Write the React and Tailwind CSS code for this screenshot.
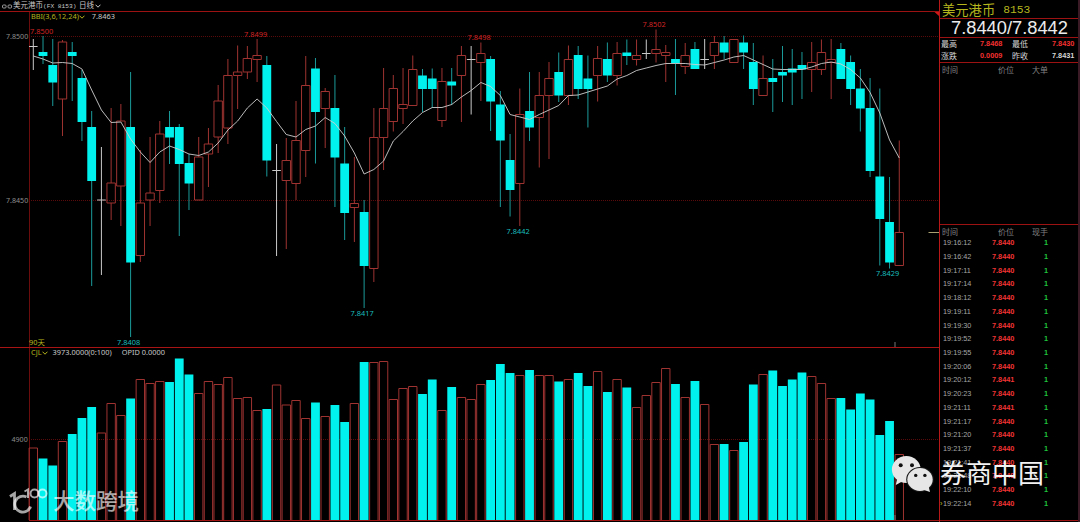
const UP = '#9e3331'
const DOWN = '#00f2ee'
const STEP = 9.73

// kind (u: up, d: down, f: flat), high, body top, body bottom, low, average, volume top
const DAYS = [
  ['f', 39, 46.5, 46.5, 70, 56, 448], ['d', 36, 52, 56, 64, 59, 458.5], ['d', 39, 65, 82.5, 106, 63, 465.5],
  ['u', 40, 42, 99, 136, 62.5, 441.5], ['d', 42, 52, 56, 101, 63.5, 434], ['d', 70, 78, 122, 141, 69, 418],
  ['d', 111, 127, 181, 286, 90, 407], ['f', 147, 200, 200, 275, 110, 433], ['u', 108, 183, 203, 220, 122.5, 403.5],
  ['u', 104, 121, 186, 226, 122, 415.5], ['d', 72, 127, 262.5, 337, 139, 398.5], ['u', 150, 203, 255.5, 262, 152, 379.5],
  ['u', 137, 193, 200, 226, 162.5, 383.5], ['u', 121, 134, 190.5, 203, 152, 381.5], ['d', 111, 127, 137.5, 164, 146, 382],
  ['d', 124, 127, 164, 236, 149.5, 358.5], ['d', 154, 163, 183.5, 210, 154, 374.5], ['u', 137, 157, 200, 200, 155.5, 393.5],
  ['u', 128, 144, 154, 187, 152, 381.5], ['u', 85, 101, 137, 153, 143, 384.5], ['u', 59, 75.5, 128, 144, 130, 377.5],
  ['u', 45.5, 72, 75.5, 109, 121, 398.5], ['u', 46, 58.5, 72, 79, 108, 397.5], ['u', 39, 55.5, 59.5, 82, 99, 410.5],
  ['d', 56, 65, 160.5, 176.5, 108, 409], ['f', 144, 170.5, 170.5, 256, 121.5, 385], ['u', 138, 160.5, 180.5, 249, 134.5, 405],
  ['u', 101, 140.5, 183.5, 200, 137, 400.5], ['u', 56, 85.5, 150.5, 177, 129.5, 418.5], ['d', 58, 68.5, 112, 163.5, 126, 402.5],
  ['u', 88, 91.5, 108.5, 148, 117.5, 416.5], ['d', 75, 108, 157.5, 207, 123.5, 405], ['d', 127, 163.5, 213, 240, 136, 422],
  ['u', 157, 203.5, 207.5, 242, 153, 403.5], ['d', 200, 212, 266, 308, 174, 362], ['u', 108, 137.5, 268.5, 282, 169.5, 362.5],
  ['u', 68, 108.5, 137.5, 170, 161, 361.5], ['u', 75, 88.5, 121.5, 131.5, 141, 399.5], ['u', 68, 104.5, 108.5, 124, 131.5, 388.5],
  ['u', 55.5, 69.5, 105.5, 105.5, 121, 386.5], ['d', 69, 75.5, 89, 112, 112.5, 394], ['d', 68.5, 78.5, 89, 108, 107.5, 379.5],
  ['u', 68, 81.5, 120.5, 127, 107.5, 410.5], ['d', 68, 81.5, 85.5, 105, 104.5, 387], ['u', 46, 55.5, 75.5, 122, 97, 397.5],
  ['f', 46, 59.5, 59.5, 114.5, 90.5, 399.5], ['u', 42.5, 53.5, 62.5, 101, 82.5, 384.5], ['d', 56, 59, 101.5, 131, 86.5, 380],
  ['d', 91, 104.5, 140.5, 207, 95.5, 364], ['d', 134, 160, 190, 216.5, 114.5, 373], ['u', 88.5, 114.5, 183.5, 226, 117, 375.5],
  ['d', 72, 111, 127.5, 141, 119.5, 370], ['u', 72, 95.5, 117.5, 167.5, 114.5, 375.5], ['u', 62, 78.5, 95.5, 159, 110, 375.5],
  ['d', 52.5, 72, 95.5, 102, 105.5, 381.5], ['u', 45.5, 59.5, 95.5, 105, 95.5, 379.5], ['d', 46, 55, 89, 99, 95, 373],
  ['d', 55.5, 78.5, 89, 127.5, 92, 386], ['u', 46, 58.5, 75.5, 101.5, 89, 371.5], ['d', 42.5, 59, 75.5, 82, 86, 392],
  ['u', 42, 53.5, 75.5, 85.5, 79, 379.5], ['d', 39.5, 52.5, 56, 65, 75.5, 387.5], ['u', 39.5, 55.5, 59.5, 65.5, 70.5, 407.5],
  ['f', 39.5, 53.5, 53.5, 59, 68, 395.5], ['u', 29.5, 49.5, 53.5, 62.5, 65.5, 382.5], ['u', 45, 52.5, 55.5, 82, 63.5, 368.5],
  ['d', 39, 59, 63, 95, 63.5, 384], ['u', 43, 55.5, 66.5, 74, 63.5, 397.5], ['d', 42, 49, 69, 69, 64.5, 381],
  ['f', 39, 59.5, 59.5, 69, 65, 404.5], ['u', 36, 42.5, 55.5, 69, 62.5, 444.5], ['d', 36, 42.5, 52.5, 59, 60, 444],
  ['u', 39.5, 39.5, 62.5, 62.5, 57, 450.5], ['d', 35.5, 42.5, 52.5, 69, 55.5, 442], ['d', 43, 62, 89, 105, 60, 384.5],
  ['u', 55.5, 78.5, 95.5, 95.5, 64.5, 374.5], ['d', 59, 78, 82, 112, 69, 370.5], ['d', 46, 72, 75.5, 102, 69.5, 386],
  ['d', 49, 68.5, 72.5, 105, 69.5, 379.5], ['d', 52, 65, 69.5, 99, 69.5, 372.5], ['u', 42, 62.5, 69.5, 92, 67, 376.5],
  ['u', 39.5, 52.5, 69.5, 75, 63.5, 383.5], ['u', 39, 59.5, 62.5, 99, 62, 398.5], ['d', 43, 49, 79, 79, 64, 398],
  ['d', 55.5, 62, 89, 105, 69.5, 409.5], ['d', 69, 88.5, 108.5, 131.5, 78, 393.5], ['d', 78, 108, 171, 177, 92.5, 399.5],
  ['d', 88.5, 176.5, 219, 265.5, 113, 435], ['d', 177, 222, 262.5, 268.5, 140, 421], ['u', 140.5, 232.5, 265.5, 265.5, 158, 454.5],
]

const PRICE_TAGS = [
  [30, 33.7, '7.8500', '#d02424'], [244, 37.2, '7.8499', '#d02424'], [467.5, 39.7, '7.8498', '#d02424'],
  [642.5, 27.2, '7.8502', '#d02424'], [117, 344.7, '7.8408', '#19bdbd'], [350.5, 315.7, '7.8417', '#19bdbd'],
  [506.5, 233.7, '7.8442', '#19bdbd'], [876, 276.2, '7.8429', '#19bdbd'],
]

const TICKS = [
  ['19:16:12', '7.8440'], ['19:16:42', '7.8440'], ['19:17:11', '7.8440'], ['19:17:14', '7.8440'],
  ['19:18:12', '7.8440'], ['19:19:11', '7.8440'], ['19:19:30', '7.8440'], ['19:19:52', '7.8440'],
  ['19:19:55', '7.8440'], ['19:20:06', '7.8440'], ['19:20:12', '7.8441'], ['19:20:23', '7.8440'],
  ['19:21:11', '7.8441'], ['19:21:17', '7.8440'], ['19:21:20', '7.8440'], ['19:21:37', '7.8440'],
  ['19:21:41', '7.8440'], ['19:21:48', '7.8440'], ['19:22:10', '7.8440'], ['19:22:14', '7.8440'],
]

const dayX = (i) => 33.3 + i * STEP

function Chevron() {
  return (
    <svg width="6" height="4" viewBox="0 0 6 4" fill="none" stroke="currentColor" aria-hidden="true">
      <path d="M0.5 0.7L3 3.2L5.5 0.7" />
    </svg>
  )
}

function Candle({ day, x }) {
  const [kind, high, top, bottom, low] = day
  if (kind === 'f') {
    return <path d={`M${x} ${high}V${low}M${x - 4.3} ${top}H${x + 4.3}`} stroke="#c9c9c9" />
  }
  if (kind === 'd') {
    return (
      <g>
        <path d={`M${x} ${high}V${low}`} stroke="#1b9a9a" />
        <rect x={x - 4.4} y={top} width="8.8" height={bottom - top} fill={DOWN} />
      </g>
    )
  }
  return (
    <path
      d={`M${x} ${high}V${top}M${x} ${bottom}V${low}M${x - 4.2} ${top}h8.4V${bottom}h-8.4z`}
      fill="none"
      stroke={UP}
    />
  )
}

function PriceChart() {
  return (
    <svg className="block h-[335px] w-full" viewBox="0 12 939 335" fontFamily='"Noto Sans", sans-serif' fontSize="7.1">
      <path d="M29.5 12V347" stroke="#6a0c0c" />
      <path d="M29 36.5H938M29 200.5H938" stroke="#5a0a0a" strokeDasharray="1 1" />
      <text x="6" y="39" fill="#8e8e8e">7.8500</text>
      <text x="6" y="202.8" fill="#8e8e8e">7.8450</text>
      {DAYS.map((day, i) => (
        <Candle key={i} day={day} x={dayX(i)} />
      ))}
      <polyline
        points={DAYS.map((day, i) => `${dayX(i)},${day[5]}`).join(' ')}
        fill="none"
        stroke="#cfcfcf"
        strokeWidth="0.9"
      />
      {PRICE_TAGS.map(([x, y, label, color]) => (
        <text key={label} x={x} y={y} fill={color} fontSize="7.4">{label}</text>
      ))}
      <path d="M928.5 232.5H939" stroke="#a8a070" />
      <path d="M895 342V347" stroke="#777" />
      <path d="M934 11.5H939V16z" fill="#d01818" />
    </svg>
  )
}

function VolumeChart() {
  return (
    <svg className="block h-[174px] w-full" viewBox="0 348 939 174" fontFamily='"Noto Sans", sans-serif' fontSize="7.1">
      <path d="M29.5 348V520" stroke="#6a0c0c" />
      <path d="M29 439.5H938" stroke="#5a0a0a" strokeDasharray="1 1" />
      <text x="11.5" y="441.5" fill="#8e8e8e">4900</text>
      {DAYS.map(([kind, , , , , , top], i) =>
        kind === 'd' ? (
          <rect key={i} x={dayX(i) - 4.4} y={top} width="8.8" height={520 - top} fill={DOWN} />
        ) : (
          <path key={i} d={`M${dayX(i) - 4.2} 520V${top}h8.4V520`} fill="none" stroke={UP} />
        ),
      )}
      <path d="M29 520.5H939" stroke="#a01414" />
      <path d="M895 515V520" stroke="#777" />
    </svg>
  )
}

function ColumnHeads({ labels }) {
  return (
    <div className="grid h-[13px] grid-cols-[56px_34px_1fr] items-center pl-[2px] text-[8px] leading-none text-[#828282]">
      {labels.map((label) => (
        <span key={label}>{label}</span>
      ))}
    </div>
  )
}

function QuotePanel() {
  return (
    <aside className="flex w-[141px] flex-none flex-col border-r-2 border-l border-r-[#3a1a24] border-l-[#b81818]">
      <div className="flex h-[19px] flex-none items-center gap-[8px] border-b border-b-[#9c1212] pt-[3px] pl-[2px] text-[13.3px] leading-none text-[#b5b51e]">
        <span>美元港币</span>
        <span className="font-['Liberation_Mono'] text-[11.3px]">8153</span>
      </div>
      <div className="flex h-[19px] flex-none items-center border-b border-b-[#9c1212] pt-px pl-[11px] font-['Liberation_Sans'] text-[18.3px] leading-none text-[#ececec]">
        7.8440/7.8442
      </div>
      <div className="grid h-[25px] flex-none grid-cols-[39px_32px_40px_1fr] content-center items-center gap-y-[4px] border-b border-b-[#9c1212] pl-px text-[8px] leading-[8px] text-[#d6d6d6]">
        <span>最高</span>
        <b className="font-['Liberation_Sans'] text-[7.3px] text-[#f03030]">7.8468</b>
        <span>最低</span>
        <b className="font-['Liberation_Sans'] text-[7.3px] text-[#f03030]">7.8430</b>
        <span>涨跌</span>
        <b className="font-['Liberation_Sans'] text-[7.3px] text-[#f03030]">0.0009</b>
        <span>昨收</span>
        <b className="font-['Liberation_Sans'] text-[7.3px]">7.8431</b>
      </div>
      <div className="h-[162px] flex-none border-b border-b-[#9c1212]">
        <ColumnHeads labels={['时间', '价位', '大单']} />
      </div>
      <ColumnHeads labels={['时间', '价位', '现手']} />
      <div className="-mt-[2px] flex-none">
        {TICKS.map(([time, price], i) => (
          <div
            key={time}
            className="grid h-[13.72px] grid-cols-[49px_52px_1fr] items-center pl-[3px] font-['Liberation_Sans'] text-[7.3px] leading-none"
          >
            <span className="relative text-[#a5a5a5]">
              {time}
              {i === TICKS.length - 1 && <i className="absolute -left-[3px] text-[#c4c422] not-italic">›</i>}
            </span>
            <b className="text-[#f03434]">{price}</b>
            <b className="text-[#1fc33c]">1</b>
          </div>
        ))}
      </div>
      <div className="mt-auto h-[2px] border-t border-t-[#9c1212]" />
    </aside>
  )
}

function SiteMark() {
  return (
    <div className="absolute top-[487px] left-[9px] flex items-center gap-[5px] text-white/65">
      <svg width="39" height="28" viewBox="0 0 39 28" fill="none" stroke="currentColor" strokeWidth="2.8" aria-hidden="true">
        <path d="M1 9.5L5.5 6.5V23" />
        <path d="M17.5 10A8 8 0 1 0 21.5 19.5" />
        <path d="M15.5 4.5L19 2.5V11" strokeWidth="2" />
        <circle cx="25.5" cy="6.5" r="4" strokeWidth="2" />
        <circle cx="33.5" cy="6.5" r="4" strokeWidth="2" />
      </svg>
      <span className="text-[21.5px] leading-[28px] font-medium">大数跨境</span>
    </div>
  )
}

function PublisherMark() {
  return (
    <div className="absolute top-[453px] left-[891px] flex items-center gap-[6px] text-[#f2f2f2]">
      <svg width="43" height="37" viewBox="0 0 43 37" aria-hidden="true">
        <g fill="#e6e6e6">
          <ellipse cx="15.3" cy="14.5" rx="14.4" ry="13.4" />
          <path d="M6 24L4.8 30L12 26z" />
        </g>
        <ellipse cx="29" cy="24.4" rx="13.8" ry="12.4" fill="#181818" />
        <g fill="#e6e6e6">
          <ellipse cx="29" cy="24.5" rx="12.7" ry="11.4" />
          <path d="M33 35L39 37L37.5 31z" />
        </g>
        <g fill="#111">
          <circle cx="9.7" cy="10.2" r="2" />
          <circle cx="21" cy="10.2" r="2" />
          <circle cx="24.7" cy="20.4" r="1.7" />
          <circle cx="33.9" cy="20.4" r="1.7" />
        </g>
      </svg>
      <span className="text-[26px] leading-[40px] font-normal">券商中国</span>
    </div>
  )
}

export default function App() {
  return (
    <div className="relative flex h-[522px] w-[1080px] overflow-hidden bg-black font-['Noto_Sans','Noto_Sans_CJK_SC',sans-serif]">
      <main className="flex w-[939px] flex-none flex-col">
        <header className="flex h-[12px] items-center border-b border-b-[#9c1212] pt-px pl-[2px] text-[7.5px] leading-none text-[#c8c8c8]">
          <svg width="11" height="5" viewBox="0 0 11 5" fill="none" stroke="#9a9a9a" aria-hidden="true">
            <rect x="0.5" y="1" width="3.6" height="3" rx="1" />
            <rect x="6" y="1" width="3.6" height="3" rx="1" />
          </svg>
          <span className="w-[66px] whitespace-pre">
            美元港币<span className="font-['Liberation_Mono'] text-[6.2px]">(FX 8153)</span>
          </span>
          <span className="mr-px">日线</span>
          <Chevron />
        </header>
        <section className="relative border-b border-b-[#a81414]">
          <PriceChart />
          <div className="absolute top-0 left-[31px] flex h-[9px] items-center text-[7.4px] leading-none text-[#b5b51e]">
            <span>BBI(3,6,12,24)</span>
            <Chevron />
            <span className="ml-[7px] text-[#c8c8c8]">7.8463</span>
          </div>
          <span className="absolute bottom-px left-[29px] text-[7.4px] leading-[8px] text-[#b5b51e]">90天</span>
        </section>
        <section className="relative">
          <VolumeChart />
          <div className="absolute top-0 left-[31px] flex h-[9px] items-center text-[7.4px] leading-none text-[#c8c8c8]">
            <span className="flex items-center text-[#b5b51e]">
              CJL
              <Chevron />
            </span>
            <span className="ml-[5px]">3973.0000(0:100)</span>
            <span className="ml-[10px]">OPID 0.0000</span>
          </div>
        </section>
      </main>
      <QuotePanel />
      <SiteMark />
      <PublisherMark />
    </div>
  )
}
